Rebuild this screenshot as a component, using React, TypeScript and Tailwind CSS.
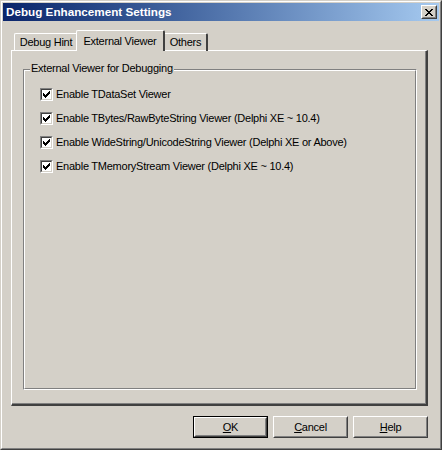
import type { ReactNode } from "react";

const font = { fontFamily: '"Liberation Sans", Arial, sans-serif' };

function CheckBox() {
  return (
    <span className="box-border flex h-[13px] w-[13px] shrink-0 border border-t-[#808080] border-l-[#808080] border-r-white border-b-white">
      <span className="box-border flex h-full w-full items-center justify-center border border-t-[#404040] border-l-[#404040] border-r-[#d4d0c8] border-b-[#d4d0c8] bg-white">
        <svg width="7" height="7" viewBox="0 0 7 7" shapeRendering="crispEdges">
          <path d="M0 2h1v3h-1zM1 3h1v3h-1zM2 4h1v3h-1zM3 3h1v3h-1zM4 2h1v3h-1zM5 1h1v3h-1zM6 0h1v3h-1z" fill="#000" />
        </svg>
      </span>
    </span>
  );
}

function Check({ label }: { label: string }) {
  return (
    <div className="flex h-[13px] items-center">
      <CheckBox />
      <span className="ml-[3px] text-[11px] leading-[13px] tracking-[-0.25px] text-black">{label}</span>
    </div>
  );
}

function Button({ children, isDefault }: { children: ReactNode; isDefault?: boolean }) {
  return (
    <div
      className={
        "box-border h-[22px] w-[75px] " + (isDefault ? "border border-black" : "")
      }
    >
      <div className="box-border h-full w-full border border-t-white border-l-white border-r-[#404040] border-b-[#404040]">
        <div className="box-border flex h-full w-full items-center justify-center border border-t-[#d4d0c8] border-l-[#d4d0c8] border-r-[#808080] border-b-[#808080] text-[11px] tracking-[-0.25px] text-black">
          {children}
        </div>
      </div>
    </div>
  );
}

export default function App() {
  return (
    <div
      style={font}
      className="box-border h-[450px] w-[442px] border border-t-[#d4d0c8] border-l-[#d4d0c8] border-r-[#404040] border-b-[#404040] bg-[#d4d0c8]"
    >
      <div className="box-border flex h-full flex-col border border-t-white border-l-white border-r-[#808080] border-b-[#808080] p-px">
        {/* title bar */}
        <div className="flex h-[18px] shrink-0 items-center bg-gradient-to-r from-[#0a246a] to-[#a6caf0] pl-[3px] pr-[2px]">
          <span className="text-[11.7px] font-bold text-white">Debug Enhancement Settings</span>
          <div className="ml-auto box-border h-[14px] w-[16px] border border-t-white border-l-white border-r-[#404040] border-b-[#404040] bg-[#d4d0c8]">
            <div className="box-border flex h-full w-full items-center justify-center border border-t-[#d4d0c8] border-l-[#d4d0c8] border-r-[#808080] border-b-[#808080]">
              <svg width="8" height="7" viewBox="0 0 8 7" shapeRendering="crispEdges">
                <path
                  d="M0 0h2v1h-2zM6 0h2v1h-2zM1 1h2v1h-2zM5 1h2v1h-2zM2 2h4v1h-4zM3 3h2v1h-2zM2 4h4v1h-4zM1 5h2v1h-2zM5 5h2v1h-2zM0 6h2v1h-2zM6 6h2v1h-2z"
                  fill="#000"
                />
              </svg>
            </div>
          </div>
        </div>

        {/* tabs */}
        <div className="relative z-10 mt-[9px] -mb-px ml-[11px] flex h-[21px] items-end text-[11px] tracking-[-0.25px] text-black">
          <div className="box-border flex h-[18px] w-[63px] items-center justify-center rounded-tl-[2px] border-t border-l border-t-white border-l-white">
            Debug Hint
          </div>
          <div className="-ml-[1px] box-border flex h-[21px] w-[89px] items-start justify-center rounded-t-[2px] border-t border-l border-r-2 border-t-white border-l-white border-r-[#404040] bg-[#d4d0c8] pt-[2px]">
            External Viewer
          </div>
          <div className="box-border flex h-[18px] w-[43px] items-center justify-center rounded-tr-[2px] border-t border-r-2 border-t-white border-r-[#404040]">
            Others
          </div>
        </div>

        {/* panel */}
        <div className="ml-[8px] box-border h-[356px] w-[417px] border-t border-l border-r-2 border-b-2 border-t-white border-l-white border-r-[#404040] border-b-[#404040]">
          <div className="box-border h-full w-full border-r border-b border-r-[#808080] border-b-[#808080] pt-[18px] pl-[11px]">
            <div className="relative box-border h-[321px] w-[394px] border border-t-[#808080] border-l-[#808080] border-r-white border-b-white">
              <div className="box-border h-full w-full border border-t-white border-l-white border-r-[#808080] border-b-[#808080] pt-[17px] pl-[15px]">
                <div className="flex flex-col gap-[11px]">
                  <Check label="Enable TDataSet Viewer" />
                  <Check label="Enable TBytes/RawByteString Viewer (Delphi XE ~ 10.4)" />
                  <Check label="Enable WideString/UnicodeString Viewer (Delphi XE or Above)" />
                  <Check label="Enable TMemoryStream Viewer (Delphi XE ~ 10.4)" />
                </div>
              </div>
              <span className="absolute -top-[8px] left-[6px] bg-[#d4d0c8] px-px text-[11px] leading-[13px] tracking-[-0.25px] text-black">
                External Viewer for Debugging
              </span>
            </div>
          </div>
        </div>

        {/* buttons */}
        <div className="mt-[10px] ml-[190px] flex gap-[5px]">
          <Button isDefault>
            <span className="underline underline-offset-1">O</span>K
          </Button>
          <Button>
            <span className="underline underline-offset-1">C</span>ancel
          </Button>
          <Button>
            <span className="underline underline-offset-1">H</span>elp
          </Button>
        </div>
      </div>
    </div>
  );
}
